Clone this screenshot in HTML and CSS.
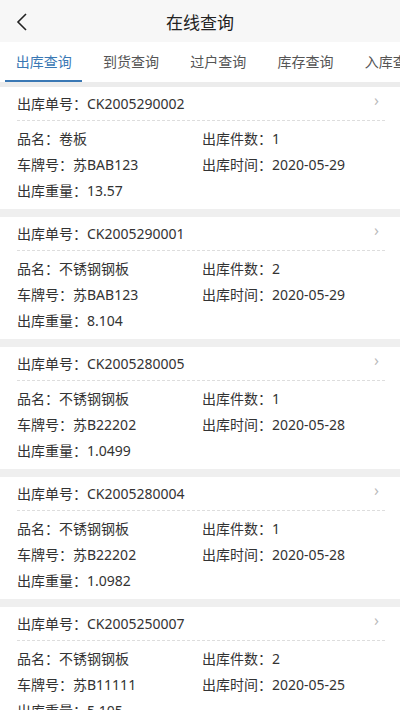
FILE: index.html
```html
<!DOCTYPE html>
<html lang="zh-CN">
<head>
    <meta charset="UTF-8">
    <meta name="viewport" content="width=device-width, initial-scale=1.0">
    <title>在线查询</title>
    <link rel="stylesheet" href="styles.css">
</head>
<body>
    <header class="topbar">
        <a href="#" class="back">
            <svg width="12" height="18" viewBox="0 0 12 18"><path d="M10 1 L2 9 L10 17" fill="none" stroke="#222" stroke-width="1.6"/></svg>
        </a>
        <h1 class="title">在线查询</h1>
    </header>

    <nav class="tabs">
        <a href="#" class="tab active">出库查询</a>
        <a href="#" class="tab">到货查询</a>
        <a href="#" class="tab">过户查询</a>
        <a href="#" class="tab">库存查询</a>
        <a href="#" class="tab">入库查询</a>
    </nav>

    <div class="list">
        <div class="card">
            <div class="card-head">出库单号：CK2005290002<span class="arrow">›</span></div>
            <div class="card-body">
                <div class="field">品名：卷板</div>
                <div class="field">出库件数：1</div>
                <div class="field">车牌号：苏BAB123</div>
                <div class="field">出库时间：2020-05-29</div>
                <div class="field">出库重量：13.57</div>
            </div>
        </div>
        <div class="card">
            <div class="card-head">出库单号：CK2005290001<span class="arrow">›</span></div>
            <div class="card-body">
                <div class="field">品名：不锈钢钢板</div>
                <div class="field">出库件数：2</div>
                <div class="field">车牌号：苏BAB123</div>
                <div class="field">出库时间：2020-05-29</div>
                <div class="field">出库重量：8.104</div>
            </div>
        </div>
        <div class="card">
            <div class="card-head">出库单号：CK2005280005<span class="arrow">›</span></div>
            <div class="card-body">
                <div class="field">品名：不锈钢钢板</div>
                <div class="field">出库件数：1</div>
                <div class="field">车牌号：苏B22202</div>
                <div class="field">出库时间：2020-05-28</div>
                <div class="field">出库重量：1.0499</div>
            </div>
        </div>
        <div class="card">
            <div class="card-head">出库单号：CK2005280004<span class="arrow">›</span></div>
            <div class="card-body">
                <div class="field">品名：不锈钢钢板</div>
                <div class="field">出库件数：1</div>
                <div class="field">车牌号：苏B22202</div>
                <div class="field">出库时间：2020-05-28</div>
                <div class="field">出库重量：1.0982</div>
            </div>
        </div>
        <div class="card">
            <div class="card-head">出库单号：CK2005250007<span class="arrow">›</span></div>
            <div class="card-body">
                <div class="field">品名：不锈钢钢板</div>
                <div class="field">出库件数：2</div>
                <div class="field">车牌号：苏B11111</div>
                <div class="field">出库时间：2020-05-25</div>
                <div class="field">出库重量：5.105</div>
            </div>
        </div>
    </div>
</body>
</html>
```

FILE: styles.css
```css
* {
    margin: 0;
    padding: 0;
    box-sizing: border-box;
}

body {
    font-family: "Noto Sans", "Noto Sans CJK SC", sans-serif;
    font-size: 14px;
    color: #333;
    background-color: #efefef;
    overflow: hidden;
}

.topbar {
    height: 42px;
    background-color: #f7f7f7;
    display: flex;
    align-items: center;
    justify-content: center;
    position: relative;
}

.back {
    position: absolute;
    left: 16px;
    top: 13px;
    display: block;
    height: 18px;
}

.title {
    font-size: 17px;
    font-weight: normal;
    color: #222;
}

.tabs {
    display: flex;
    height: 40px;
    background-color: #fff;
    white-space: nowrap;
    border-bottom: 5px solid #ececec;
    height: 45px;
}

.tab {
    flex: 0 0 87.3px;
    text-align: center;
    line-height: 40px;
    height: 40px;
    color: #555;
    text-decoration: none;
    position: relative;
}

.tab.active {
    color: #3a78b4;
}

.tab.active::after {
    content: "";
    position: absolute;
    left: 5px;
    right: 5px;
    bottom: 0;
    height: 2px;
    background-color: #3a78b4;
}

.card {
    background-color: #fff;
    margin-bottom: 8px;
}

.card-head {
    margin: 0 15px 0 17px;
    height: 34px;
    line-height: 34px;
    border-bottom: 1px dashed #ddd;
    position: relative;
}

.arrow {
    position: absolute;
    right: 6px;
    top: -4px;
    color: #bbb;
    font-size: 16px;
}

.card-body {
    display: grid;
    grid-template-columns: 185px 1fr;
    padding: 5px 17px;
}

.field {
    line-height: 26px;
    height: 26px;
}
```
